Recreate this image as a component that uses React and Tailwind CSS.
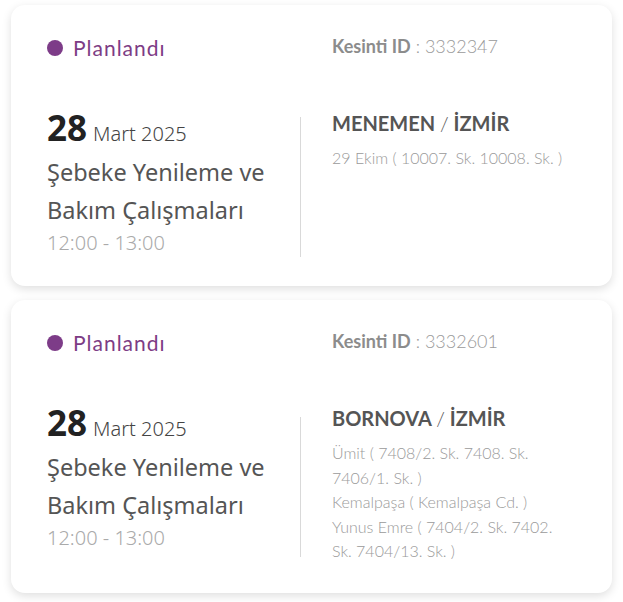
import React from 'react';

const outages = [
  {
    id: '3332347',
    status: 'Planlandı',
    day: '28',
    monthYear: 'Mart 2025',
    title: 'Şebeke Yenileme ve Bakım Çalışmaları',
    time: '12:00 - 13:00',
    district: 'MENEMEN',
    city: 'İZMİR',
    streets: ['29 Ekim ( 10007. Sk. 10008. Sk. )'],
  },
  {
    id: '3332601',
    status: 'Planlandı',
    day: '28',
    monthYear: 'Mart 2025',
    title: 'Şebeke Yenileme ve Bakım Çalışmaları',
    time: '12:00 - 13:00',
    district: 'BORNOVA',
    city: 'İZMİR',
    streets: [
      'Ümit ( 7408/2. Sk. 7408. Sk. 7406/1. Sk. )',
      'Kemalpaşa ( Kemalpaşa Cd. )',
      'Yunus Emre ( 7404/2. Sk. 7402. Sk. 7404/13. Sk. )',
    ],
  },
];

function OutageCard({ item }) {
  return (
    <div className="bg-white rounded-[14px] shadow-[0_3px_10px_rgba(0,0,0,0.13)] px-[36px] pt-[29px] pb-[29px]">
      {/* Status + outage id */}
      <div className="flex items-center font-['Lato',sans-serif]">
        <div className="w-[285px] flex items-center gap-[10px]">
          <span className="w-[16px] h-[16px] rounded-full bg-[#7d3c88]" />
          <span className="text-[21px] leading-[28px] tracking-[1px] text-[#7d3c85]">{item.status}</span>
        </div>
        <div className="text-[18px] leading-[24px] -mt-[4px]">
          <span className="font-bold text-[#8c8c8c]">Kesinti ID</span>
          <span className="font-light text-[#9a9a9a]"> : {item.id}</span>
        </div>
      </div>

      <div className="flex items-start mt-[54px]">
        {/* Date and work description */}
        <div className="w-[253px] shrink-0 font-['Noto_Sans',sans-serif]">
          <div className="flex items-baseline gap-[6px] leading-[24px]">
            <span className="text-[35px] font-bold text-[#222]">{item.day}</span>
            <span className="text-[20px] font-light text-[#444]">{item.monthYear}</span>
          </div>
          <p className="text-[23.5px] leading-[38px] text-[#555] w-[235px] mt-[7px]">{item.title}</p>
          <p className="text-[20px] leading-[28px] font-light text-[#aaa]">{item.time}</p>
        </div>

        <div className="w-px h-[140px] self-center bg-[#d9d9d9] shrink-0" />

        {/* Location */}
        <div className="-mt-[7px] pl-[31px] flex-1 font-['Lato',sans-serif]">
          <div className="text-[20px] leading-[28px] font-bold text-[#555]">
            {item.district} <span className="font-light">/</span> {item.city}
          </div>
          <div className="mt-[9px] text-[16px] leading-[24.5px] font-light text-[#9a9a9a]">
            {item.streets.map((s) => (
              <p key={s}>{s}</p>
            ))}
          </div>
        </div>
      </div>
    </div>
  );
}

export default function App() {
  return (
    <div className="min-h-screen bg-white px-[11px] pt-[5px] pb-[9px] flex flex-col gap-[14px]">
      {outages.map((o) => (
        <OutageCard key={o.id} item={o} />
      ))}
    </div>
  );
}
